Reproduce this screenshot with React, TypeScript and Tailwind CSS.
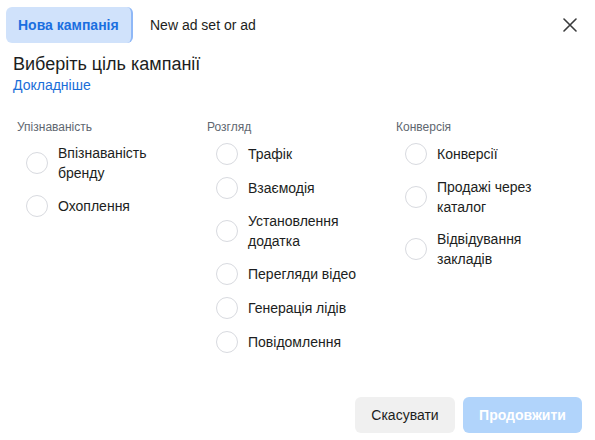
import React from "react";

const columns: { title: string; w: string; items: string[][] }[] = [
  { title: "Упізнаваність", w: "w-[190px]", items: [["Впізнаваність", "бренду"], ["Охоплення"]] },
  {
    title: "Розгляд",
    w: "w-[189px]",
    items: [
      ["Трафік"],
      ["Взаємодія"],
      ["Установлення", "додатка"],
      ["Перегляди відео"],
      ["Генерація лідів"],
      ["Повідомлення"],
    ],
  },
  {
    title: "Конверсія",
    w: "w-[189px]",
    items: [["Конверсії"], ["Продажі через", "каталог"], ["Відвідування", "закладів"]],
  },
];

function Radio({ lines }: { lines: string[] }) {
  return (
    <div className="flex items-center gap-[10px] pl-[9px]">
      <span className="w-[22px] h-[22px] rounded-full border border-[#d8dadf] bg-white shrink-0" />
      <div className="text-[14px] leading-[20px] text-[#1c1e21]">
        {lines.map((l, i) => (
          <div key={i}>{l}</div>
        ))}
      </div>
    </div>
  );
}

export default function App() {
  return (
    <div
      className="w-[595px] h-[440px] bg-white flex flex-col"
      style={{ fontFamily: '"Liberation Sans", Arial, sans-serif' }}
    >
      <div className="flex items-center pt-[7px] pl-[6px] pr-[18px]">
        <div className="h-[36px] w-[127px] rounded-[6px] bg-[#d0e2fb] border-r-2 border-[#8fb8f7] flex items-center pl-[12px] text-[14px] font-bold text-[#1b6fe0]">
          Нова кампанія
        </div>
        <div className="ml-[17px] text-[14px] text-[#1c1e21]">New ad set or ad</div>
        <div className="ml-auto">
          <svg width="14" height="14" viewBox="0 0 14 14" fill="none">
            <path d="M1 1L13 13M13 1L1 13" stroke="#3a3b3c" strokeWidth="1.6" strokeLinecap="round" />
          </svg>
        </div>
      </div>

      <div className="px-[13px] mt-[10px]">
        <div className="text-[18px] leading-[22px] text-[#1c1e21]">Виберіть ціль кампанії</div>
        <div className="text-[14px] leading-[20px] text-[#1a6ed8]">Докладніше</div>
      </div>

      <div className="flex pl-[17px] mt-[24px]">
        {columns.map((col) => (
          <div key={col.title} className={`${col.w} flex flex-col`}>
            <div className="text-[12px] leading-[16px] text-[#606770] mb-[8px]">{col.title}</div>
            <div className="flex flex-col gap-[12px]">
              {col.items.map((it) => (
                <Radio key={it.join(" ")} lines={it} />
              ))}
            </div>
          </div>
        ))}
      </div>

      <div className="mt-auto flex justify-end gap-[8px] pr-[13px] pb-[7px]">
        <button className="h-[36px] w-[100px] rounded-[6px] bg-[#f0f0f0] text-[14px] text-[#1c1e21]">
          Скасувати
        </button>
        <button className="h-[36px] w-[119px] rounded-[6px] bg-[#b1d4fb] text-[14px] font-bold text-white">
          Продовжити
        </button>
      </div>
    </div>
  );
}
